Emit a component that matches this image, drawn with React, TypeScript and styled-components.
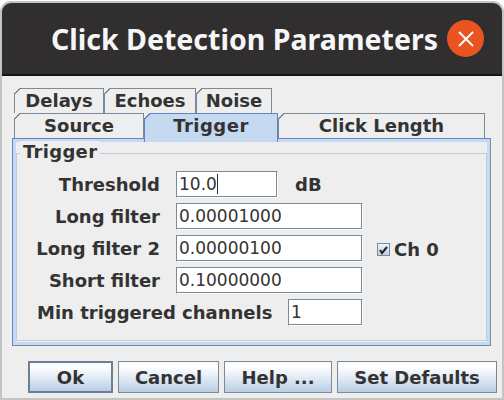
import React from 'react';
import styled, { createGlobalStyle } from 'styled-components';

const GlobalStyle = createGlobalStyle`
  html, body {
    margin: 0;
    padding: 0;
    background: #ffffff;
  }
`;

const Page = styled.div`
  width: 504px;
  height: 400px;
  overflow: hidden;
  box-sizing: border-box;
  display: flex;
  flex-direction: column;
`;

const Frame = styled.div`
  flex: 1;
  margin-top: 1px;
  padding: 2px 2px 2px 2px;
  background: #c4c4c4;
  border-radius: 11px 11px 0 0;
  display: flex;
  flex-direction: column;
`;

const TitleBar = styled.div`
  height: 73px;
  flex: none;
  background: #302e2f;
  border-bottom: 2px solid #161616;
  border-radius: 9px 9px 0 0;
  box-sizing: border-box;
  display: flex;
  align-items: center;
  padding: 0 18px 0 49px;
  justify-content: space-between;
`;

const Title = styled.div`
  font: 700 28.5px 'Noto Sans', 'Open Sans', sans-serif;
  color: #f6f6f6;
  white-space: nowrap;
`;

const CloseButton = styled.div`
  width: 37px;
  height: 37px;
  border-radius: 50%;
  background: #e95420;
  display: flex;
  align-items: center;
  justify-content: center;
  flex: none;
`;

const Body = styled.div`
  flex: 1;
  background: #eeeeee;
  padding: 12px 7px 0 10px;
  font: 700 18px 'DejaVu Sans', sans-serif;
  color: #333333;
`;

const TabRow = styled.div`
  display: flex;
  height: 25px;
  padding-left: 2px;
`;

const Tab = styled.div<{ $width: number; $active?: boolean }>`
  position: relative;
  width: ${(p) => p.$width}px;
  box-sizing: border-box;
  display: flex;
  align-items: center;
  justify-content: center;
  border: 1px solid ${(p) => (p.$active ? '#6382bf' : '#7a8a99')};
  border-bottom: 0;
  background: ${(p) => (p.$active ? '#c5d9f0' : '#eeeeee')};
  height: ${(p) => (p.$active ? 29 : 25)}px;
  padding-bottom: ${(p) => (p.$active ? 6 : 2)}px;
  letter-spacing: ${(p) => (p.$active ? 0.5 : 0)}px;
  z-index: ${(p) => (p.$active ? 2 : 1)};

  &::before {
    content: '';
    position: absolute;
    left: -1px;
    top: -1px;
    width: 6px;
    height: 6px;
    background: linear-gradient(135deg, #eeeeee 0 48%, ${(p) => (p.$active ? '#6382bf' : '#7a8a99')} 48% 60%, transparent 60%);
  }
`;

const TabPanel = styled.div`
  width: 479px;
  height: 208px;
  box-sizing: border-box;
  border: 1px solid #7a8a99;
  border-color: #6382bf #7a8a99 #7a8a99 #6382bf;
  background: #eeeeee;
  padding: 3px;
  box-shadow: inset 0 0 0 3px #c5d9f0;
  position: relative;
  z-index: 0;
`;

const GroupBox = styled.div`
  box-sizing: border-box;
  border: 1px solid #b8cfe5;
  position: relative;
  margin-top: 11px;
  height: 188px;
`;

const GroupTitle = styled.div`
  position: absolute;
  left: 3px;
  top: -13px;
  padding: 0 3px;
  background: #eeeeee;
  line-height: 22px;
  letter-spacing: 0.3px;
`;

const FormGrid = styled.div`
  display: grid;
  grid-template-columns: 159px 185px auto;
  grid-template-rows: repeat(5, 32px);
  padding-top: 14px;
`;

const Label = styled.div`
  display: flex;
  align-items: center;
  justify-content: flex-end;
  padding-right: 16px;
  white-space: nowrap;
`;

const Field = styled.div<{ $width: number }>`
  width: ${(p) => p.$width}px;
  height: 27px;
  flex: none;
  box-sizing: border-box;
  align-self: center;
  background: #fff;
  border: 1px solid #7a8a99;
  border-right-color: #fff;
  border-bottom-color: #fff;
  box-shadow: inset -1px -1px 0 #7a8a99;
  font: 400 17px 'DejaVu Sans', sans-serif;
  color: #333;
  padding-left: 2px;
  display: flex;
  align-items: center;
`;

const Caret = styled.span`
  width: 1px;
  height: 20px;
  background: #333;
`;

const ThresholdCell = styled.div`
  grid-column: 2 / span 2;
  display: flex;
  align-items: center;
  gap: 17px;
`;

const ChannelBox = styled.div`
  display: flex;
  align-items: center;
  gap: 4px;
  padding: 3px 0 0 16px;
`;

const CheckMark = styled.div`
  width: 13px;
  height: 13px;
  box-sizing: border-box;
  border: 1px solid #7a8a99;
  background: linear-gradient(#eef4fb, #bcd0e6);
  display: flex;
  align-items: center;
  justify-content: center;
`;

const MinRow = styled.div`
  grid-column: 1 / span 3;
  display: flex;
  align-items: center;
`;

const MinLabel = styled.div`
  width: 271px;
  padding-left: 20px;
  box-sizing: border-box;
  white-space: nowrap;
`;

const ButtonRow = styled.div`
  display: flex;
  gap: 5px;
  padding: 15px 0 0 16px;
`;

const Button = styled.div<{ $width: number; $default?: boolean }>`
  width: ${(p) => p.$width}px;
  flex: none;
  height: 32px;
  box-sizing: border-box;
  border: ${(p) => (p.$default ? '2px solid #6c7f93' : '1px solid #7a8a99')};
  background: linear-gradient(#f6f9fc 0%, #ffffff 15%, #dfe9f4 55%, #b8cfe5 100%);
  display: flex;
  align-items: center;
  justify-content: center;
`;

const fields = [
  { label: 'Long filter', value: '0.00001000' },
  { label: 'Long filter 2', value: '0.00000100', channel: true },
  { label: 'Short filter', value: '0.10000000' },
];

const App: React.FC = () => (
  <Page>
    <GlobalStyle />
    <Frame>
      <TitleBar>
        <Title>Click Detection Parameters</Title>
        <CloseButton>
          <svg width="16" height="16" viewBox="0 0 16 16">
            <path d="M1 1L15 15M15 1L1 15" stroke="#fff" strokeWidth="2" />
          </svg>
        </CloseButton>
      </TitleBar>
      <Body>
        <TabRow>
          <Tab $width={90}>Delays</Tab>
          <Tab $width={92}>Echoes</Tab>
          <Tab $width={76}>Noise</Tab>
        </TabRow>
        <TabRow>
          <Tab $width={130}>Source</Tab>
          <Tab $width={134} $active>Trigger</Tab>
          <Tab $width={207}>Click Length</Tab>
        </TabRow>
        <TabPanel>
          <GroupBox>
            <GroupTitle>Trigger</GroupTitle>
            <FormGrid>
              <Label>Threshold</Label>
              <ThresholdCell>
                <Field $width={102}>10.0<Caret /></Field>
                dB
              </ThresholdCell>
              {fields.map((f) => (
                <React.Fragment key={f.label}>
                  <Label>{f.label}</Label>
                  <Field $width={187}>{f.value}</Field>
                  {f.channel ? (
                    <ChannelBox>
                      <CheckMark>
                        <svg width="11" height="11" viewBox="0 0 11 11">
                          <path d="M2 6L4 9L9 3" stroke="#222" strokeWidth="2" fill="none" />
                        </svg>
                      </CheckMark>
                      Ch 0
                    </ChannelBox>
                  ) : (
                    <div />
                  )}
                </React.Fragment>
              ))}
              <MinRow>
                <MinLabel>Min triggered channels</MinLabel>
                <Field $width={75}>1</Field>
              </MinRow>
            </FormGrid>
          </GroupBox>
        </TabPanel>
        <ButtonRow>
          <Button $width={85} $default>Ok</Button>
          <Button $width={101}>Cancel</Button>
          <Button $width={108}>Help ...</Button>
          <Button $width={160}>Set Defaults</Button>
        </ButtonRow>
      </Body>
    </Frame>
  </Page>
);

export default App;
